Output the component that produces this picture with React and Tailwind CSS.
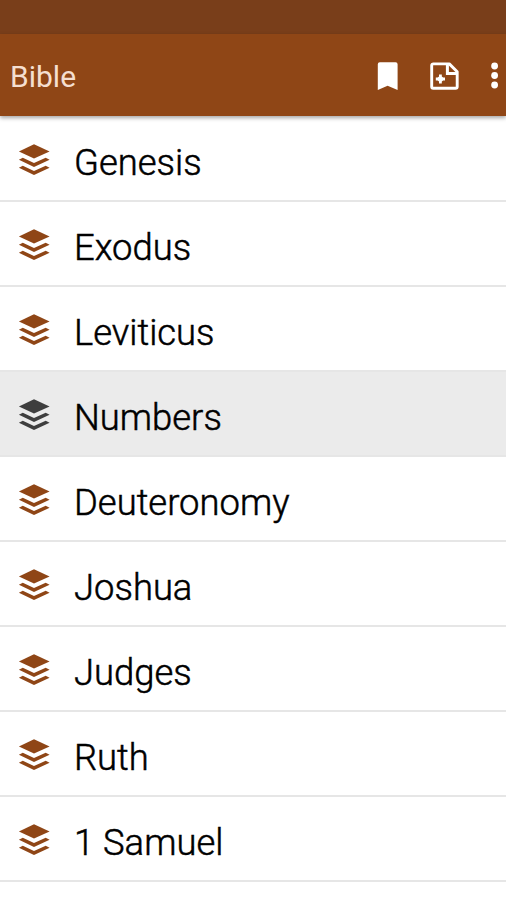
const BOOKS = [
  'Genesis',
  'Exodus',
  'Leviticus',
  'Numbers',
  'Deuteronomy',
  'Joshua',
  'Judges',
  'Ruth',
  '1 Samuel',
];

const SELECTED = 'Numbers';

function LayersIcon({ className }) {
  return (
    <svg viewBox="0 0 32 32" fill="currentColor" className={className} aria-hidden="true">
      <path d="M16 .2 31.6 7.4 16 14.6 .9 7.4Z" />
      <path d="M.9 15.8 4.8 13.8 16 19 27.7 13.8 31.6 15.8 16 23.1Z" />
      <path d="M.9 23.8 4.8 21.8 16 27 27.7 21.8 31.6 23.8 16 31.1Z" />
    </svg>
  );
}

function BookmarkIcon() {
  return (
    <svg viewBox="0 0 22 28" fill="currentColor" className="w-[22px] h-7">
      <path d="M2.8 .3H18.6a2 2 0 0 1 2 2V28L10.6 23.8 .8 28V2.3a2 2 0 0 1 2-2Z" />
    </svg>
  );
}

function NoteAddIcon() {
  return (
    <svg viewBox="0 0 30 28" fill="none" className="w-[30px] h-7">
      <path
        d="M3.3 1.9H19.3L27.2 9.8V24.7a1.6 1.6 0 0 1-1.6 1.6H3.3a1.6 1.6 0 0 1-1.6-1.6V3.5a1.6 1.6 0 0 1 1.6-1.6Z"
        stroke="currentColor"
        strokeWidth="2.9"
        strokeLinejoin="round"
      />
      <path d="M17.4 2V11.5H27.4" stroke="currentColor" strokeWidth="3" />
      <path d="M10.4 12.4V21.6M5.8 17H15" stroke="currentColor" strokeWidth="2.8" />
      <circle cx="10.4" cy="17" r="2.8" fill="currentColor" />
    </svg>
  );
}

function MoreIcon() {
  return (
    <svg viewBox="0 0 8 28" fill="currentColor" className="w-2 h-7">
      <circle cx="3.6" cy="4" r="3.4" />
      <circle cx="3.6" cy="13.5" r="3.4" />
      <circle cx="3.6" cy="23" r="3.4" />
    </svg>
  );
}

export default function App() {
  return (
    <div
      className="flex h-[900px] w-full flex-col overflow-hidden bg-white"
      style={{ fontFamily: 'Roboto, sans-serif' }}
    >
      {/* Status bar */}
      <div className="h-[34px] shrink-0 bg-[#793e1a]" />

      {/* Toolbar */}
      <header className="relative z-10 flex h-[82px] shrink-0 items-center bg-[#8f4616] pl-2.5 pr-[7px] shadow-[0_2px_4px_rgba(0,0,0,0.35)]">
        <h1 className="flex-1 pt-[3px] text-[30px] font-normal leading-none text-[#f5dfd0]">Bible</h1>
        <div className="flex items-center pt-px text-white">
          <button aria-label="Bookmarks" className="mr-[31px]">
            <BookmarkIcon />
          </button>
          <button aria-label="Add note" className="mr-[31px]">
            <NoteAddIcon />
          </button>
          <button aria-label="More options">
            <MoreIcon />
          </button>
        </div>
      </header>

      {/* Book list */}
      <ul className="pt-px">
        {BOOKS.map((book) => {
          const selected = book === SELECTED;
          return (
            <li
              key={book}
              className={`flex h-[85px] items-center border-b-2 border-[#e6e6e6] pl-[18px] ${
                selected ? 'bg-[#ebebeb]' : 'bg-white'
              }`}
            >
              <LayersIcon
                className={`mb-[-3px] h-8 w-8 ${selected ? 'text-[#3e3e3e]' : 'text-[#8f4616]'}`}
              />
              <span className="ml-6 pt-2.5 text-[36.4px] font-light leading-none text-black [-webkit-text-stroke:0.5px_black]">
                {book}
              </span>
            </li>
          );
        })}
      </ul>
    </div>
  );
}
